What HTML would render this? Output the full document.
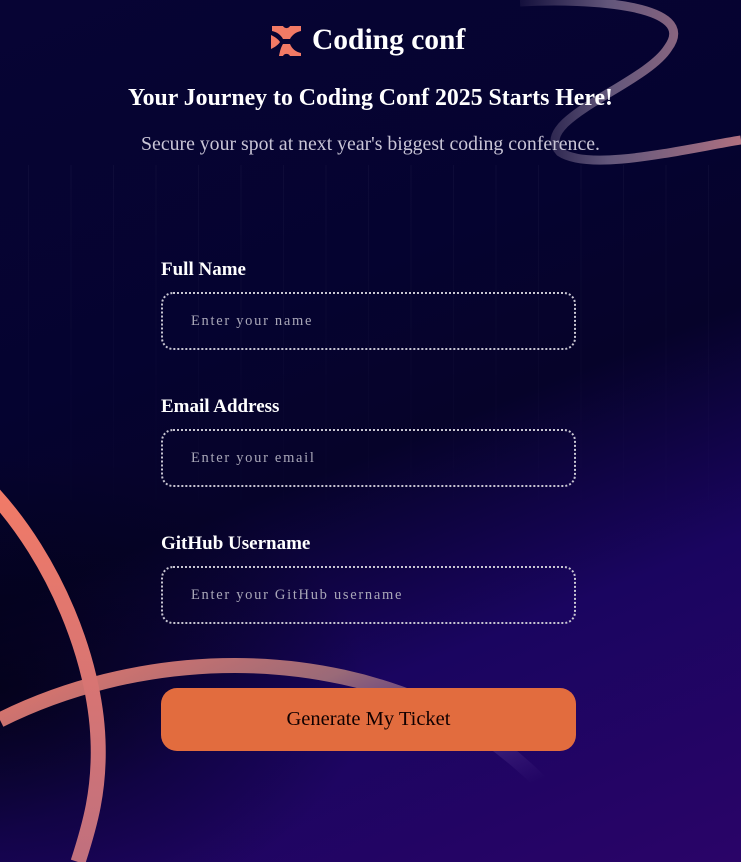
<!DOCTYPE html>
<html style="width:741px;height:862px;overflow:hidden;background:#05032e"><head><meta charset="utf-8"><style>
*{margin:0;padding:0;box-sizing:border-box}
body{width:741px;height:862px;overflow:hidden;position:relative;font-family:"Liberation Serif",serif;
background:linear-gradient(158deg,#070434 0%,#050330 35%,#06032a 52%,#1a0560 72%,#2a0468 100%);}
.dark{position:absolute;left:0;top:430px;width:400px;height:432px;background:radial-gradient(ellipse at 0% 60%,rgba(2,2,20,0.8),rgba(2,2,20,0) 65%)}
.bg{position:absolute;left:0;top:0}
.lines{position:absolute;left:0;top:165px;width:741px;height:335px;
background:repeating-linear-gradient(90deg,transparent 0 28px,rgba(255,255,255,0.035) 28px 29px,transparent 29px 42.5px);
-webkit-mask:linear-gradient(180deg,rgba(0,0,0,1),rgba(0,0,0,0.2));}
.logo{position:absolute;top:24px;left:270px;display:flex;align-items:center;gap:9px;color:#fff;font-weight:bold;font-size:29.5px}
h1{position:absolute;top:85px;width:100%;text-align:center;color:#fff;font-size:23.8px;font-weight:bold}
.sub{position:absolute;top:133px;width:100%;text-align:center;color:#c9c5d6;font-size:19.8px}
label{position:absolute;left:161px;color:#fff;font-size:19px;font-weight:bold}
.in{position:absolute;left:161px;width:415px;height:58px;border:2px dotted #c8c6d2;border-radius:12px;color:#a9a7b8;font-size:14.5px;letter-spacing:1.7px;padding-left:28px;line-height:54px}
.btn{position:absolute;left:161px;top:688px;width:415px;height:63px;border-radius:16px;background:#e26c3e;color:#100;font-size:20.5px;text-align:center;line-height:63px}
</style></head><body>
<div class="dark"></div>
<div class="lines"></div>
<svg class="bg" width="741" height="862">
<defs>
<linearGradient id="g1" x1="0" y1="0" x2="1" y2="0"><stop offset="0" stop-color="#8a7a9a" stop-opacity="0.1"/><stop offset="0.4" stop-color="#8a7a9a" stop-opacity="0.7"/><stop offset="1" stop-color="#b07080"/></linearGradient>
<linearGradient id="g2" x1="0" y1="0" x2="0" y2="1"><stop offset="0" stop-color="#f17a67"/><stop offset="1" stop-color="#c0707e"/></linearGradient>
<linearGradient id="g3" x1="0" y1="0" x2="1" y2="0.6"><stop offset="0" stop-color="#e9776a"/><stop offset="0.45" stop-color="#9a6a78"/><stop offset="0.8" stop-color="#6a4a9a" stop-opacity="0.5"/><stop offset="1" stop-color="#5a3a9a" stop-opacity="0"/></linearGradient>
</defs>
<path d="M520 2 C590 -2 700 5 668 48 C645 85 530 120 560 152 C590 172 680 150 741 140" fill="none" stroke="url(#g1)" stroke-width="9"/>
<path d="M0 720 C130 655 310 640 460 720 C515 752 555 795 580 825" fill="none" stroke="url(#g3)" stroke-width="15"/>
<path d="M-8 492 C55 560 95 660 98 740 C100 790 90 825 78 862" fill="none" stroke="url(#g2)" stroke-width="15"/>
</svg>
<div class="logo"><svg width="33" height="32" viewBox="0 0 33 32"><g fill="#f27a65"><path d="M2 1 H13 A4 4 0 0 0 20 1 H31 L31 6 C26 7 22 10 20 14 L13 14 C11 10 7 7 2 6Z"/><path d="M1 10 C5 12 8 14 10 17 C8 20 5 22 1 24Z"/><path d="M13 19 H20 C22 24 26 27 31 28 V31 H20 A4 4 0 0 0 13 31 H9 C10 26 11 22 13 19Z"/></g></svg>Coding conf</div>
<h1>Your Journey to Coding Conf 2025 Starts Here!</h1>
<div class="sub">Secure your spot at next year's biggest coding conference.</div>
<label style="top:259px">Full Name</label>
<div class="in" style="top:292px">Enter your name</div>
<label style="top:396px">Email Address</label>
<div class="in" style="top:429px">Enter your email</div>
<label style="top:533px">GitHub Username</label>
<div class="in" style="top:566px">Enter your GitHub username</div>
<div class="btn">Generate My Ticket</div>
</body></html>
